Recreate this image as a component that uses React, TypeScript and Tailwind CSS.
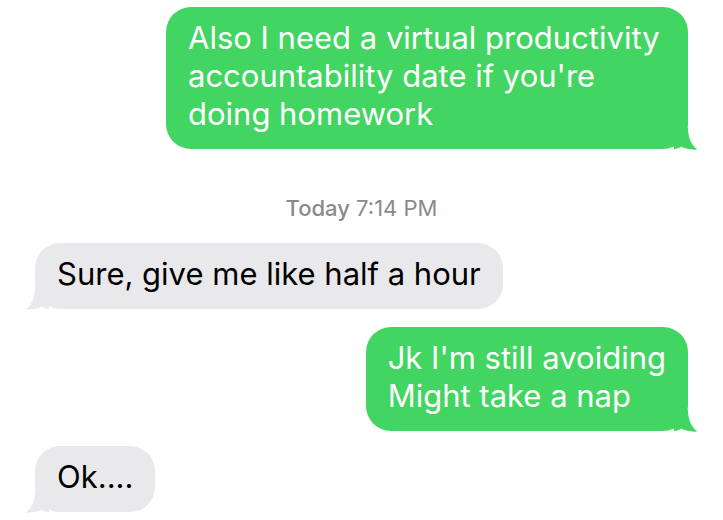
import React from "react";

const FONT = { fontFamily: "Inter, 'Noto Sans', 'Liberation Sans', sans-serif" };

function Tail({ side, color }: { side: "left" | "right"; color: string }) {
  return (
    <svg
      width="24"
      height="22"
      viewBox="0 0 24 22"
      className={
        side === "right"
          ? "absolute right-[-10px] bottom-[-1px]"
          : "absolute left-[-10px] bottom-[-1px] -scale-x-100"
      }
    >
      <path
        d="M0 0 H14 C14 9 17 17 23.5 21.6 C17 22 11 20.8 7 18.6 C5 20 3 21 0 21 Z"
        fill={color}
      />
    </svg>
  );
}

function Sent({ children, className = "" }: { children: React.ReactNode; className?: string }) {
  return (
    <div className={"relative self-end " + className}>
      <div className="relative z-10 rounded-[25px] bg-[#42d562] pl-[22px] pr-[22px] pt-[12px] pb-[16px] text-[31px] leading-[38px] text-white whitespace-nowrap">
        {children}
      </div>
      <Tail side="right" color="#42d562" />
    </div>
  );
}

function Received({ children, className = "" }: { children: React.ReactNode; className?: string }) {
  return (
    <div className={"relative self-start " + className}>
      <div className="relative z-10 rounded-[25px] bg-[#e9e9eb] pl-[22px] pr-[22px] pt-[12px] pb-[16px] text-[31px] leading-[38px] text-black whitespace-nowrap">
        {children}
      </div>
      <Tail side="left" color="#e9e9eb" />
    </div>
  );
}

export default function App() {
  return (
    <div className="h-[520px] w-[723px] overflow-hidden bg-white" style={FONT}>
      <div className="flex flex-col px-[35px] pt-[7px]">
        <Sent className="w-[522px]">
          Also I need a virtual productivity
          <br />
          accountability date if you're
          <br />
          doing homework
        </Sent>
        <div className="mt-[46px] text-center text-[22px] leading-[26px] text-[#8a8a8e]">
          <span className="font-medium">Today</span> 7:14 PM
        </div>
        <Received className="mt-[22px]">Sure, give me like half a hour</Received>
        <Sent className="mt-[18px]">
          Jk I'm still avoiding
          <br />
          Might take a nap
        </Sent>
        <Received className="mt-[15px]">Ok....</Received>
      </div>
    </div>
  );
}
